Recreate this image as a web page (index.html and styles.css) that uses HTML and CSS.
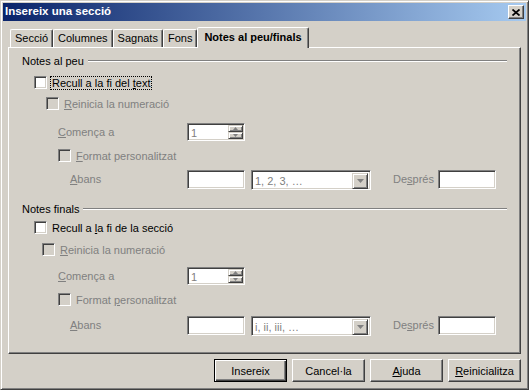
FILE: index.html
```html
<!DOCTYPE html>
<html lang="ca">
<head>
<meta charset="utf-8">
<title>Insereix una secció</title>
<link rel="stylesheet" href="styles.css">
</head>
<body>
<div class="window">
  <div class="titlebar">
    <span class="title">Insereix una secció</span>
    <span class="close"><svg width="8" height="7" viewBox="0 0 8 7"><path d="M0.5 0.5L7.5 6.5M7.5 0.5L0.5 6.5" stroke="#000" stroke-width="1.7" fill="none"/></svg></span>
  </div>
  <div class="content">
    <div class="tabs">
      <div class="tab">Secció</div>
      <div class="tab">Columnes</div>
      <div class="tab">Sagnats</div>
      <div class="tab">Fons</div>
      <div class="tab active">Notes al peu/finals</div>
    </div>
    <div class="panel">
      <div class="head"><span>Notes al peu</span><span class="rule"></span></div>
      <div class="row chk sp7 in12"><span class="check"></span><span class="lbl focus">Recull a la fi del <u>t</u>ext</span></div>
      <div class="row chk sp6 in24 dis"><span class="check off"></span><span class="lbl"><u>R</u>einicia la numeració</span></div>
      <div class="row spinrow sp11 in36 dis"><span class="name"><u>C</u>omença a</span>
        <span class="spin"><span class="spin-text">1</span><span class="spin-btns"><span class="sbtn"><svg width="5" height="3" viewBox="0 0 5 3"><path d="M2.5 0L5 3H0z" fill="#808080"/></svg></span><span class="sbtn"><svg width="5" height="3" viewBox="0 0 5 3"><path d="M0 0H5L2.5 3z" fill="#808080"/></svg></span></span></span>
      </div>
      <div class="row chk sp6 in36 dis"><span class="check off"></span><span class="lbl"><u>F</u>ormat personalitzat</span></div>
      <div class="row fields sp7 in48 dis"><span class="name2"><u>A</u>bans</span>
        <span class="field"></span>
        <span class="select"><span class="sel-text">1, 2, 3, …</span><span class="drop"><svg width="7" height="4" viewBox="0 0 7 4"><path d="M0 0H7L3.5 4z" fill="#808080"/></svg></span></span>
        <span class="name3">De<u>s</u>prés</span>
        <span class="field"></span>
      </div>

      <div class="head sp12"><span>Notes finals</span><span class="rule"></span></div>
      <div class="row chk sp4 in12"><span class="check"></span><span class="lbl">Recull a <u>l</u>a fi de la secció</span></div>
      <div class="row chk sp7 in20 dis"><span class="check off"></span><span class="lbl"><u>R</u>einicia la numeració</span></div>
      <div class="row spinrow sp9 in36 dis"><span class="name"><u>C</u>omença a</span>
        <span class="spin"><span class="spin-text">1</span><span class="spin-btns"><span class="sbtn"><svg width="5" height="3" viewBox="0 0 5 3"><path d="M2.5 0L5 3H0z" fill="#808080"/></svg></span><span class="sbtn"><svg width="5" height="3" viewBox="0 0 5 3"><path d="M0 0H5L2.5 3z" fill="#808080"/></svg></span></span></span>
      </div>
      <div class="row chk sp6 in36 dis"><span class="check off"></span><span class="lbl">Format <u>p</u>ersonalitzat</span></div>
      <div class="row fields sp9 in48 dis"><span class="name2"><u>A</u>bans</span>
        <span class="field"></span>
        <span class="select"><span class="sel-text">i, ii, iii, …</span><span class="drop"><svg width="7" height="4" viewBox="0 0 7 4"><path d="M0 0H7L3.5 4z" fill="#808080"/></svg></span></span>
        <span class="name3">De<u>s</u>prés</span>
        <span class="field"></span>
      </div>
    </div>
    <div class="buttons">
      <span class="btn default">Insereix</span>
      <span class="btn">Cancel·la</span>
      <span class="btn"><u>A</u>juda</span>
      <span class="btn"><u>R</u>einicialitza</span>
    </div>
  </div>
</div>
</body>
</html>
```
FILE: styles.css
```css
* { box-sizing: border-box; }
html, body { margin: 0; padding: 0; background: #D4D0C8; }
body {
  font-family: "Liberation Sans", Arial, sans-serif;
  font-size: 11px;
  color: #000;
}
u { text-decoration: underline; text-underline-offset: 1px; }

.window {
  width: 529px;
  height: 390px;
  background: #D4D0C8;
  border: 1px solid;
  border-color: #D4D0C8 #404040 #404040 #D4D0C8;
  box-shadow: inset 1px 1px #fff, inset -1px -1px #808080;
  padding: 2px;
  display: flex;
  flex-direction: column;
}

.titlebar {
  height: 18px;
  flex: none;
  background: linear-gradient(to right, #0A246A, #A6CAF0);
  display: flex;
  align-items: center;
  justify-content: space-between;
  padding: 0 2px;
}
.title {
  color: #fff;
  font-weight: bold;
  font-size: 11.5px;
  line-height: 1;
}
.close {
  width: 16px;
  height: 14px;
  background: #D4D0C8;
  border: 1px solid;
  border-color: #fff #404040 #404040 #fff;
  box-shadow: inset -1px -1px #808080;
  display: flex;
  align-items: center;
  justify-content: center;
}
.close svg { display: block; }

.content {
  flex: 1;
  display: flex;
  flex-direction: column;
  padding: 0 5px;
}

.tabs {
  display: flex;
  align-items: flex-end;
  height: 21px;
  margin-top: 6px;
  margin-bottom: -1px;
  padding-left: 2px;
}
.tab {
  height: 18px;
  margin-bottom: 1px;
  padding: 0 4px;
  border: 1px solid;
  border-bottom: none;
  border-color: #fff #404040 transparent #fff;
  box-shadow: inset -1px 0 #808080;
  border-radius: 2px 2px 0 0;
  display: flex;
  align-items: center;
  line-height: 1;
  white-space: nowrap;
}
.tab.active {
  height: 21px;
  margin-bottom: 0;
  padding: 0 6px 2px;
  font-weight: bold;
  background: #D4D0C8;
  position: relative;
  z-index: 1;
}

.panel {
  height: 307px;
  flex: none;
  border: 1px solid;
  border-color: #fff #404040 #404040 #fff;
  box-shadow: inset -1px -1px #808080;
  padding: 6px 13px 0;
}

.head {
  height: 14px;
  display: flex;
  align-items: center;
}
.rule {
  flex: 1;
  height: 2px;
  margin-left: 4px;
  border-top: 1px solid #808080;
  border-bottom: 1px solid #fff;
}

.row {
  display: flex;
  align-items: center;
  white-space: nowrap;
}
.row.chk { height: 15px; }
.row.spinrow { height: 20px; }
.row.fields { height: 20px; align-items: flex-start; }

.sp4 { margin-top: 4px; }
.sp6 { margin-top: 6px; }
.sp7 { margin-top: 7px; }
.sp9 { margin-top: 9px; }
.sp11 { margin-top: 11px; }
.sp12 { margin-top: 12px; }
.in12 { padding-left: 12px; }
.in20 { padding-left: 20px; }
.in24 { padding-left: 24px; }
.in36 { padding-left: 36px; }
.in48 { padding-left: 48px; }

.dis { color: #808080; }

.check {
  flex: none;
  width: 13px;
  height: 13px;
  background: #fff;
  border: 1px solid;
  border-color: #808080 #fff #fff #808080;
  box-shadow: inset 1px 1px #404040, inset -1px -1px #D4D0C8;
}
.check.off { background: #D4D0C8; }
.lbl {
  margin-left: 3px;
  padding: 0 1px;
  border: 1px solid transparent;
  line-height: 12px;
}
.lbl.focus { border: 1px dotted #000; }

.name { width: 129px; flex: none; }
.name2 { width: 117px; flex: none; line-height: 19px; }
.name3 { width: 45px; flex: none; margin-left: 22px; line-height: 19px; }

.field, .spin, .select {
  flex: none;
  background: #fff;
  border: 1px solid;
  border-color: #808080 #fff #fff #808080;
  box-shadow: inset 1px 1px #404040, inset -1px -1px #D4D0C8;
}
.field { width: 58px; height: 19px; }
.spin {
  width: 58px;
  height: 18px;
  display: flex;
  padding: 1px;
}
.spin-text {
  flex: 1;
  padding-left: 2px;
  line-height: 16px;
}
.spin-btns {
  width: 15px;
  display: flex;
  flex-direction: column;
}
.sbtn, .drop {
  background: #D4D0C8;
  border: 1px solid;
  border-color: #D4D0C8 #404040 #404040 #D4D0C8;
  box-shadow: inset 1px 1px #fff, inset -1px -1px #808080;
  display: flex;
  align-items: center;
  justify-content: center;
}
.sbtn { flex: 1; }
.sbtn svg, .drop svg { display: block; }
.select {
  width: 120px;
  height: 20px;
  margin-left: 6px;
  display: flex;
  padding: 2px;
}
.sel-text {
  flex: 1;
  padding-left: 1px;
  line-height: 16px;
}
.drop { width: 16px; height: 16px; }

.buttons {
  display: flex;
  justify-content: flex-end;
  gap: 5px;
  margin-top: 5px;
}
.btn {
  width: 73px;
  height: 23px;
  border: 1px solid;
  border-color: #fff #404040 #404040 #fff;
  box-shadow: inset -1px -1px #808080;
  display: flex;
  align-items: center;
  justify-content: center;
  white-space: nowrap;
}
.btn.default {
  border-color: #000;
  box-shadow: inset 1px 1px #fff, inset -1px -1px #404040, inset -2px -2px #808080;
}
```
